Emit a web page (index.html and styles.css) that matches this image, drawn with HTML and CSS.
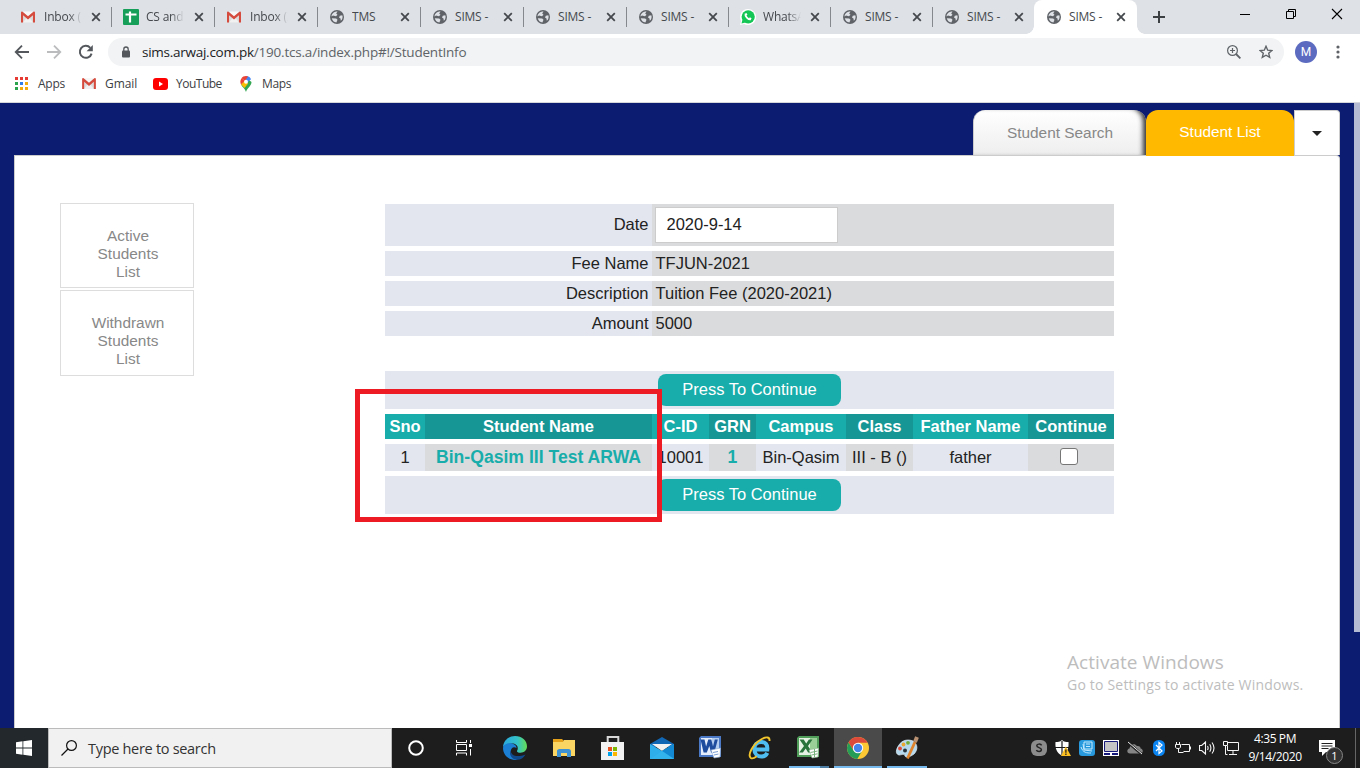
FILE: index.html
```html
<!DOCTYPE html>
<html lang="en">
<head>
<meta charset="utf-8">
<title>SIMS - Student Info</title>
<link rel="stylesheet" href="styles.css">
</head>
<body>
<svg class="sprite" width="0" height="0" aria-hidden="true">
  <symbol id="gmail" viewBox="0 0 15 12"><path fill="#dcdcdc" d="M1 1h13v11H1z"/><path fill="#f7f7f7" d="M2 0h11L7.500 6z"/><path fill="#fff" opacity=".6" d="M2 12l4-5h3l4 5z"/><path fill="#d54b3d" d="M0 1.300C0 .5.500 0 1.300 0L7.500 5.200 13.700 0c.8 0 1.300.5 1.300 1.300V12h-2.200V4.200L7.500 8.800 2.200 4.200V12H0z"/></symbol>
  <symbol id="globe" viewBox="0 0 14 14"><circle cx="7" cy="7" r="7" fill="#5f6368"/><path fill="#dee1e6" d="M7.500 1.500 6.200 3.400 7.500 4.800 6 6.300 3 5.600 1.500 6.500C1.600 3.600 4.300 1.300 7.500 1.500zM1.800 8.200l4.400.2 1.300 1.300-1.100 2.700C4 12.300 2.200 10.500 1.800 8.200zM12.300 5.200l-2.500.6-.8 1.800 1.500 1 .3 2.200c1.600-1.400 2.300-3.600 1.500-5.600z"/></symbol>
  <symbol id="x" viewBox="0 0 10 10"><path d="M1.200 1.200l7.600 7.600M8.800 1.200L1.200 8.800" stroke="#45494d" stroke-width="1.800"/></symbol>
</svg>

<header class="tabstrip">
  <div class="tab first"><svg class="fav mail"><use href="#gmail"/></svg><span class="fade">Inbox (1</span><svg class="close"><use href="#x"/></svg></div>
  <div class="tab"><svg class="fav" viewBox="0 0 16 16"><rect width="16" height="16" rx="1" fill="#169f58"/><path d="M2.500 5.500h11M7 2.500v11" stroke="#fff" stroke-width="2.200"/></svg><span class="fade">CS and</span><svg class="close"><use href="#x"/></svg></div>
  <div class="tab"><svg class="fav mail"><use href="#gmail"/></svg><span class="fade">Inbox (2</span><svg class="close"><use href="#x"/></svg></div>
  <div class="tab"><svg class="fav"><use href="#globe"/></svg><span>TMS</span><svg class="close"><use href="#x"/></svg></div>
  <div class="tab"><svg class="fav"><use href="#globe"/></svg><span>SIMS -</span><svg class="close"><use href="#x"/></svg></div>
  <div class="tab"><svg class="fav"><use href="#globe"/></svg><span>SIMS -</span><svg class="close"><use href="#x"/></svg></div>
  <div class="tab slim"><svg class="fav"><use href="#globe"/></svg><span>SIMS -</span><svg class="close"><use href="#x"/></svg></div>
  <div class="tab slim"><svg class="fav wa" viewBox="0 0 16 16"><path fill="#fff" d="M8 0a8 8 0 1 1-3.800 15L0 16l1.100-4A8 8 0 0 1 8 0z"/><circle cx="8.200" cy="7.800" r="6.600" fill="#14c656"/><path fill="#14c656" d="M1.500 14.500l1-4 3 3z"/><path d="M5.500 4.800c-.8 2.300 2.600 6 5.300 5.700" stroke="#fff" stroke-width="1.700" fill="none"/><path d="M5.600 4.500l1 1.700M9.300 9.200l1.800 1" stroke="#fff" stroke-width="2"/></svg><span class="fade">WhatsA</span><svg class="close"><use href="#x"/></svg></div>
  <div class="tab slim"><svg class="fav"><use href="#globe"/></svg><span>SIMS -</span><svg class="close"><use href="#x"/></svg></div>
  <div class="tab slim nosep"><svg class="fav"><use href="#globe"/></svg><span>SIMS -</span><svg class="close"><use href="#x"/></svg></div>
  <div class="tab active"><svg class="fav"><use href="#globe"/></svg><span>SIMS -</span><svg class="close"><use href="#x"/></svg></div>
  <svg class="newtab" viewBox="0 0 12 12"><path d="M6 0v12M0 6h12" stroke="#3c4043" stroke-width="2"/></svg>
  <div class="winctl">
    <svg viewBox="0 0 12 12"><path d="M1 6.500h10" stroke="#000"/></svg>
    <svg viewBox="0 0 12 12"><path d="M1.500 3.500h7v7h-7zM3.500 3.500v-2h7v7h-2" fill="none" stroke="#000"/></svg>
    <svg viewBox="0 0 12 12"><path d="M1 1l10 10M11 1L1 11" stroke="#000" stroke-width="1.100"/></svg>
  </div>
</header>

<div class="toolbar">
  <div class="nav">
    <svg viewBox="0 0 16 16"><path d="M15 8H2M8 1.700L1.700 8 8 14.300" fill="none" stroke="#54585d" stroke-width="1.800"/></svg>
    <svg viewBox="0 0 16 16"><path d="M1 8h13M8 1.700L14.300 8 8 14.300" fill="none" stroke="#babcbe" stroke-width="1.800"/></svg>
    <svg viewBox="0 0 16 16"><path d="M13.600 9.600A6 6 0 1 1 12.300 3.800" fill="none" stroke="#54585d" stroke-width="2"/><path fill="#54585d" d="M14.800 1v6.200H8.600z"/></svg>
  </div>
  <div class="omnibox">
    <svg class="lock" viewBox="0 0 10 12"><rect x="1" y="4.500" width="8" height="7" rx="1" fill="#54585d"/><path d="M2.800 5V3.200a2.200 2.200 0 0 1 4.400 0V5" fill="none" stroke="#54585d" stroke-width="1.300"/></svg>
    <span class="url"><b>sims.arwaj.com.pk</b>/190.tcs.a/index.php#!/StudentInfo</span>
    <svg class="mag" viewBox="0 0 14 14"><circle cx="5.500" cy="5.500" r="4.900" fill="none" stroke="#5f6368" stroke-width="1.200"/><path d="M9 9l4.400 4.400" stroke="#5f6368" stroke-width="1.800"/><path d="M5.500 3v5M3 5.500h5" stroke="#5f6368" stroke-width="1.200"/></svg>
    <svg class="star" viewBox="0 0 14 14"><path d="M7 1.300l1.700 3.900 4.200.3-3.200 2.800 1 4.100L7 10.200l-3.700 2.200 1-4.100L1.100 5.500l4.200-.3z" fill="none" stroke="#5f6368" stroke-width="1.400"/></svg>
  </div>
  <div class="avatar">M</div>
  <svg class="dots" viewBox="0 0 4 14"><g fill="#5f6368"><circle cx="2" cy="2" r="1.600"/><circle cx="2" cy="7" r="1.600"/><circle cx="2" cy="12" r="1.600"/></g></svg>
</div>

<nav class="bookmarks">
  <a class="bm apps"><svg viewBox="0 0 13 13" width="13" height="13"><path fill="#e53b32" d="M0 0h3v3H0zM5 0h3v3H5zM10 0h3v3h-3z"/><path fill="#2ba24c" d="M0 5h3v3H0zM0 10h3v3H0z"/><path fill="#2f7de9" d="M5 5h3v3H5z"/><path fill="#f3ab0c" d="M10 5h3v3h-3zM5 10h3v3H5zM10 10h3v3h-3z"/></svg><span>Apps</span></a>
  <a class="bm gm"><svg width="14" height="11"><use href="#gmail"/></svg><span>Gmail</span></a>
  <a class="bm yt"><svg viewBox="0 0 15 12" width="15" height="12"><rect width="15" height="12" rx="3" fill="#f00"/><path fill="#fff" d="M6 3.600v4.800L10 6z"/></svg><span>YouTube</span></a>
  <a class="bm mp"><svg viewBox="0 0 12 16" width="12" height="16"><path fill="#34a853" d="M1 8.500C2.500 11.500 5 12.500 6 16c.8-3.500 5.500-6 5.500-10L9 4z"/><path fill="#fbbc04" d="M1 8.500l3.500-4 3.600 3-3.600 4.500z"/><path fill="#4285f4" d="M6 0c2.200 0 4.200 1.200 5 3.200L7 7 4.500 5z"/><path fill="#ea4335" d="M6 0C4 0 2.400.8 1.500 2.200L5 5 8 .4z"/><path fill="#ea4335" d="M1.500 2.200C-.2 4.500.3 7 1 8.500L5 4.800z"/><circle cx="6" cy="5.700" r="2" fill="#fff"/></svg><span>Maps</span></a>
</nav>

<main class="page">
  <div class="pagetabs">
    <div class="ptab search">Student Search</div>
    <div class="ptab list">Student List</div>
    <div class="ptab more"><i></i></div>
  </div>
  <section class="panel">
    <aside class="side">
      <a>Active<br>Students<br>List</a>
      <a class="low">Withdrawn<br>Students<br>List</a>
    </aside>
    <div class="content">
      <div class="form">
        <div class="frow tall"><label>Date</label><div><span class="input">2020-9-14</span></div></div>
        <div class="frow"><label>Fee Name</label><div>TFJUN-2021</div></div>
        <div class="frow"><label>Description</label><div>Tuition Fee (2020-2021)</div></div>
        <div class="frow"><label>Amount</label><div>5000</div></div>
      </div>
      <div class="students">
        <div class="btnrow"><span class="btn">Press To Continue</span></div>
        <div class="srow head"><div>Sno</div><div>Student Name</div><div>C-ID</div><div>GRN</div><div>Campus</div><div>Class</div><div>Father Name</div><div>Continue</div></div>
        <div class="srow data"><div>1</div><div class="link">Bin-Qasim III Test ARWA</div><div>10001</div><div class="link">1</div><div>Bin-Qasim</div><div>III - B ()</div><div>father</div><div><i class="check"></i></div></div>
        <div class="btnrow"><span class="btn">Press To Continue</span></div>
        <div class="marker"></div>
      </div>
    </div>
  </section>
  <div class="scrollthumb"></div>
  <div class="watermark"><p class="wm1">Activate Windows</p><p class="wm2">Go to Settings to activate Windows.</p></div>
</main>

<footer class="taskbar">
  <div class="start"><svg viewBox="0 0 16 16" width="16" height="16"><path fill="#fff" d="M0 2.200L6.500 1.300v6.200H0zM7.300 1.200L16 0v7.500H7.300zM0 8.400h6.500v6.300L0 13.800zM7.300 8.400H16V16l-8.700-1.200z"/></svg></div>
  <div class="searchbox"><svg viewBox="0 0 16 16" width="16" height="16"><circle cx="10.500" cy="5.500" r="4.900" fill="none" stroke="#111" stroke-width="1.200"/><path d="M7 9L.5 15.500" stroke="#111" stroke-width="1.300"/></svg><span>Type here to search</span></div>
  <div class="cell"><svg viewBox="0 0 16 16" width="16" height="16"><circle cx="8" cy="8" r="6.800" fill="none" stroke="#fff" stroke-width="2"/></svg></div>
  <div class="cell tv"><svg viewBox="0 0 16 16" width="16" height="16"><path d="M.5 0v2.500h10V0M.5 4.500h10v6H.5zM.5 15.500V13h10v2.500M14.500 0v3M14.500 9v6.500" fill="none" stroke="#fff"/><path fill="#fff" d="M13 4h3v3h-3z"/></svg></div>
  <div class="apps-row">
    <div class="cell"><svg viewBox="0 0 24 24" width="24" height="24"><defs><linearGradient id="eg" x1="0" x2="1"><stop stop-color="#2aa7df"/><stop offset=".6" stop-color="#35c3c8"/><stop offset="1" stop-color="#65dc55"/></linearGradient></defs><path fill="url(#eg)" d="M0 11C.5 4.500 6 0 12 0c7 0 12 4.800 12 10.300 0 4-3 6.400-6.500 6.400-3 0-4-1-3.300-2.200C16 11 13.500 7.500 9 7.500 5 7.500 1.500 9 0 11z"/><path fill="#1b7fd4" d="M0 12c.3-3.500 5-5.500 9-4.500 3 .8 4.500 2.500 4.500 4.500-3-2-6 0-5.700 4 .3 4 3.500 7 6.700 7.700C6.500 25 0 19.500 0 12z"/><path fill="#114a8c" d="M8 14c-1 5.500 6 8 14.500 4.500-2 3.500-5 5.500-9 5.300C8 23 5.500 17.500 8 14z"/></svg></div>
    <div class="cell"><svg viewBox="0 0 22 20" width="22" height="20"><path fill="#e6a11a" d="M0 1h9l2 2v3H0z"/><path fill="#fbd564" d="M0 4h10l1-2h11v16H0z"/><path fill="#3f92d2" d="M4 19v-6.500A2.500 2.500 0 0 1 6.500 11h9a2.500 2.500 0 0 1 2.500 2.500V19h-4v-4H8v4z"/></svg></div>
    <div class="cell"><svg viewBox="0 0 24 24" width="24" height="24"><path d="M6.700 7V1h10.600v6" fill="none" stroke="#d9d9d9" stroke-width="2"/><path fill="#f2f2f2" d="M0 6h23v18H0z"/><path fill="#e7501f" d="M7 11h4v4H7z"/><path fill="#7eb700" d="M12 11h4v4h-4z"/><path fill="#00a2ec" d="M7 16h4v4H7z"/><path fill="#fbb600" d="M12 16h4v4h-4z"/></svg></div>
    <div class="cell"><svg viewBox="0 0 24 24" width="24" height="24"><path fill="#1267b4" d="M0 8l12-7 12 7v3H0z"/><path fill="#f2f2f2" d="M2 8h20L12 15z"/><path fill="#2eaeeb" d="M0 8l12 7 12-7v15H0z"/><path fill="#1489d3" d="M12 15l12-7v15z"/><path fill="#35b6ef" d="M0 23l12-8 12 8z" opacity=".6"/></svg></div>
    <div class="cell office"><svg viewBox="0 0 24 24" width="24" height="24"><path fill="#4b79c6" d="M4 1h20v21H2V3z"/><path fill="#e3edfb" d="M4 3h18v17H4z"/><path fill="#b2cdf0" d="M15 3h7v11h-7z"/><path fill="#1d4b9e" d="M3.500 4.500h4l1.600 7 2.200-7h3l1.700 7 1.800-7h3l-3.500 13h-3.200L12.300 11l-2.500 6.500H6.600z"/><path fill="#fff" stroke="#88a7d4" stroke-width=".6" d="M14 15l9.500-2L23 22l-6 1z"/><path d="M16 17.500l5-1M17 20l4.500-1" stroke="#7b9ed2"/></svg></div>
    <div class="cell"><svg viewBox="0 0 24 24" width="24" height="24"><path d="M6.500 13.500h12.800c.5-5-2-7.500-6-7.500-4.300 0-7 3-7 7 0 4.500 3 7.500 7 7.500 3 0 5-1.500 6-3.700" fill="none" stroke="#50bdf0" stroke-width="4"/><path d="M2.800 22C-.7 19 4.500 8.500 13 3.500c5-3 9-3 8.500 1.500M2.800 22c1.500 1 4-.2 6-1.700" fill="none" stroke="#f3c52d" stroke-width="1.900"/></svg></div>
    <div class="cell run office"><svg viewBox="0 0 24 24" width="24" height="24"><path fill="#519d5a" d="M4 1h20v21H2V3z"/><path fill="#e6f3e4" d="M4 3h18v17H4z"/><path fill="#9bcf98" d="M15 3h7v11h-7z"/><path fill="#28743b" d="M4.500 4.500h4.200l2.500 4 2.700-4h3.600L13 11l4.300 6.500h-4.200l-2.400-4-2.800 4H4.200L9 11z"/><path fill="#fff" stroke="#84b888" stroke-width=".6" d="M14 15l9.500-2L23 22l-6 1z"/><path d="M15.500 17.500l7-1.500M16.500 20l6-1.200M19.500 14v8" stroke="#78b37c"/></svg></div>
    <div class="cell chrome"><svg viewBox="0 0 24 24" width="24" height="24"><circle cx="12" cy="12" r="11" fill="#fcc934"/><path fill="#dc4a3c" d="M2.500 6.500A11 11 0 0 1 21.600 6.800H12L7.500 14.600z"/><path fill="#259d58" d="M2.500 6.500A11 11 0 0 0 11.300 23l5-8.500H7.500z"/><circle cx="12" cy="12" r="5.200" fill="#fff"/><circle cx="12" cy="12" r="4.200" fill="#4683eb"/></svg></div>
    <div class="cell paint"><svg viewBox="0 0 24 24" width="24" height="24"><path fill="#b6d9ee" stroke="#e7f4fb" stroke-width=".7" d="M4 9C7 4 13 3 18 5c5 3 5 9 1 13-4 3-8 4-9 2-1-3-3-1-6-1-4-1-3-6 0-10z"/><circle cx="5" cy="12.500" r="1.900" fill="#d84d3c"/><circle cx="8.500" cy="8.500" r="1.900" fill="#e8a733"/><circle cx="13" cy="6.800" r="1.900" fill="#72ad3a"/><circle cx="10" cy="14.500" r="2" fill="#28343b"/><path d="M12.500 22.500L20 6" stroke="#df842e" stroke-width="2.800"/><path d="M20 6l2-5" stroke="#b89172" stroke-width="4"/></svg></div>
  </div>
  <div class="tray">
    <svg viewBox="0 0 16 16"><rect width="16" height="16" rx="6" fill="#8c8c8c"/><path d="M10.600 5.300C9.800 3.700 5.800 3.600 5.800 5.800c0 2.100 4.600 1.500 4.600 3.800 0 2.500-4.200 2.300-5 .4" fill="none" stroke="#242424" stroke-width="1.500"/></svg>
    <svg viewBox="0 0 16 16"><path fill="#fff" d="M7 0c2 2 4 2 6.500 2 .5 6-1 11-6.500 13.500C1.500 13 0 8 .5 2 3 2 5 2 7 0z"/><path d="M7 1v14M0 7.500h14" stroke="#1c1c1c" stroke-width="1.200"/><path fill="#fbbf22" d="M10.800 6.500L16 16H6z"/><path d="M10.900 9.500v3.200M10.900 13.500v1.500" stroke="#222" stroke-width="1.300"/></svg>
    <svg viewBox="0 0 16 16"><rect width="16" height="16" rx="3" fill="#2799dc"/><path d="M5 2h8v7H5zM4 4l1 6 8 1M2 7c2 6 6 6 10 6M7 4h4M7 6.500h4" stroke="#c5eaff" fill="none" stroke-width="1"/></svg>
    <svg viewBox="0 0 16 16"><path fill="#fff" d="M0 0h16v16H0z"/><path fill="#c4c4c4" stroke="#16197a" d="M1.500 1.500h13v10h-13z"/><path fill="#16197a" d="M1 13h6v2H1zM9 13h6v2H9z"/></svg>
    <svg viewBox="0 0 16 16"><path fill="#858585" d="M3 13.500C-.5 13.500-.5 9 2.500 8.500 3 4 8 3 9.800 6c3-.5 4 1.500 3.700 2.500 3 .5 3 5 0 5z"/><path d="M1 2.500l14 12" stroke="#222" stroke-width="2.500"/><path d="M1 2l14 12" stroke="#e8e8e8"/></svg>
    <svg viewBox="0 0 16 16"><rect x="2" width="12" height="16" rx="5.500" fill="#0a84f0"/><path d="M5 5l6 6-3 2.500v-11L11 5l-6 6" fill="none" stroke="#fff" stroke-width="1.200"/></svg>
    <svg viewBox="0 0 16 16"><path d="M6.500 4.500h8v7h-6M15.500 6.500v3M1.500 2v2.500M4.500 2v2.500M.5 4.500h5V7c0 1-1 1.500-2.500 1.500C1.500 8.500.5 8 .5 7zM3.500 8.500v4h5" fill="none" stroke="#f5f5f5"/></svg>
    <svg viewBox="0 0 16 16"><path d="M.5 5.500h2.200L6.500 2v12l-3.800-3.500H.5zM8.500 6q1.200 2 0 4M10.700 4.200q2.400 3.800 0 7.600M13 2.500q4 5.500 0 11" fill="none" stroke="#f5f5f5" stroke-width="1.100"/></svg>
    <svg viewBox="0 0 16 16"><path d="M5 2.500h10.500v8H4.500V6M10 10.500v4M6 14.500h8M.5 1.500h4v4h-4zM2.500 5.500v9h2" fill="none" stroke="#f5f5f5"/></svg>
  </div>
  <div class="clock"><span class="time">4:35 PM</span><span class="date">9/14/2020</span></div>
  <div class="action"><svg viewBox="0 0 16 16" width="16" height="16"><path fill="#fff" d="M0 0h16v12H7l-4 4v-4H0z"/><path d="M2.500 3.500h11M2.500 6h11M2.500 8.500h7" stroke="#222"/></svg><span class="badge">1</span></div>
  <div class="peek"></div>
</footer>
</body>
</html>
```
FILE: styles.css
```css
* { box-sizing: border-box; }
html, body { height: 100%; }
body {
  margin: 0;
  width: 1360px;
  height: 768px;
  overflow: hidden;
  display: flex;
  flex-direction: column;
  font-family: "Open Sans", "Noto Sans", sans-serif;
  background: #fff;
}
svg { display: block; flex: none; }
.sprite { position: absolute; }

/* browser tab strip */
.tabstrip { flex: none; height: 34px; display: flex; background: #dee1e6; padding-left: 8px; }
.tab {
  position: relative;
  width: 103px;
  display: flex;
  align-items: center;
  padding-left: 13px;
  color: #45494d;
  font-size: 12px;
}
.tab.slim { width: 102px; }
.tab span { width: 38px; margin: -1px 0 0 8px; overflow: hidden; white-space: nowrap; letter-spacing: -0.2px; }
.tab .fade { -webkit-mask-image: linear-gradient(90deg, #000 65%, transparent 100%); mask-image: linear-gradient(90deg, #000 65%, transparent 100%); }
.tab::after { content: ""; position: absolute; right: -1px; top: 7px; width: 1px; height: 20px; background: #85898e; }
.tab.nosep::after, .tab.active::after { display: none; }
.fav { width: 14px; height: 14px; }
.fav.mail { height: 12px; }
.tab .mail + span { margin-left: 9px; margin-right: -1px; }
.fav.wa, .fav[viewBox="0 0 16 16"] { width: 16px; height: 16px; margin: 0 -1px; }
.close { width: 10px; height: 10px; margin-left: 10px; }
.slim .close, .active .close { margin-left: 9px; }
.tab.active { background: #fff; border-radius: 8px 8px 0 0; }
.tab.active::before {
  content: ""; position: absolute; left: -8px; right: -8px; bottom: 0; height: 8px;
  background: radial-gradient(circle at 0 0, transparent 7.5px, #fff 8px) left / 8px 8px no-repeat,
    radial-gradient(circle at 100% 0, transparent 7.5px, #fff 8px) right / 8px 8px no-repeat;
}
.newtab { width: 12px; height: 12px; margin: 11px 0 0 16px; }
.winctl { margin-left: auto; display: flex; gap: 34px; padding: 8px 17px 0 0; }
.winctl svg { width: 12px; height: 12px; }

/* address bar */
.toolbar { flex: none; height: 36px; display: flex; align-items: center; padding-left: 14px; }
.nav { display: flex; gap: 16px; width: 94px; }
.nav svg { width: 16px; height: 16px; }
.omnibox { width: 1176px; height: 28px; border-radius: 14px; background: #f1f3f4; display: flex; align-items: center; padding: 0 11px 0 13px; }
.lock { width: 10px; height: 12px; }
.url { margin-left: 11px; font-size: 13.500px; color: #5f6368; letter-spacing: -0.21px; flex: 1; white-space: nowrap; }
.url b { font-weight: 400; color: #202124; letter-spacing: -0.26px; }
.mag { width: 14px; height: 14px; margin-right: 18px; }
.star { width: 14px; height: 14px; }
.avatar { width: 22px; height: 22px; border-radius: 50%; background: #5c6bc0; color: #fff; font: 12px/22px Roboto, sans-serif; text-align: center; margin-left: 11px; }
.dots { width: 4px; height: 14px; margin-left: 19px; }

.bookmarks { flex: none; height: 33px; border-bottom: 1px solid #d5d7da; display: flex; align-items: center; padding: 0 0 5px 15px; font-size: 12px; color: #3c4043; }
.bm { display: flex; align-items: center; }
.apps { width: 67px; gap: 10px; letter-spacing: -0.25px; }
.gm { width: 71px; gap: 9px; letter-spacing: -0.05px; }
.yt { width: 87px; gap: 8px; letter-spacing: -0.5px; }
.mp { gap: 10px; letter-spacing: -0.35px; }

/* web page */
.page { position: relative; flex: 1; background: #0c1d71; padding: 7px 20px 0 14px; display: flex; flex-direction: column; font-family: "Liberation Sans", Arial, sans-serif; }
.pagetabs { height: 45px; display: flex; justify-content: flex-end; }
.ptab { height: 46px; font-size: 15.400px; line-height: 45px; text-align: center; }
.search { width: 173px; height: 45px; border-radius: 12px 12px 0 0; background: linear-gradient(#fff, #eee); color: #888; border-left: 1px solid #ccc; box-shadow: inset -6px 0 5px -3px #333; }
.list { width: 148px; border-radius: 12px 12px 0 0; background: #ffba00; color: #fff; line-height: 44px; position: relative; }
.more { width: 46px; height: 45px; background: #fff; border: 1px solid #ccc; border-bottom: 0; border-radius: 0 4px 0 0; display: flex; justify-content: center; padding: 20px 1px 0 0; }
.more i { width: 0; height: 0; border: 5.500px solid transparent; border-top-color: #222; border-bottom: 0; }
.panel { flex: 1; background: #fff; border: 1px solid #ccc; border-bottom: 0; border-radius: 0 4px 0 0; display: flex; padding: 47px 0 0 45px; }
.side { width: 134px; display: flex; flex-direction: column; gap: 2px; }
.side a { height: 85px; border: 1px solid #ddd; padding-top: 23px; padding-left: 2px; text-align: center; font-size: 15.400px; line-height: 18px; color: #888; }
.side .low { height: 86px; }
.content { width: 729px; margin: 1px 0 0 191px; font-size: 16.500px; color: #222; }
.form { display: flex; flex-direction: column; gap: 5px; }
.frow { height: 25px; line-height: 25px; display: flex; }
.frow label { width: 267px; background: #e3e6ee; text-align: right; padding-right: 3.500px; }
.frow div { flex: 1; background: #dadbdc; padding-left: 3.500px; }
.frow.tall { height: 42px; line-height: 40px; }
.frow.tall div { padding-left: 3px; }
.frow .input { display: block; width: 183px; height: 36px; margin-top: 3px; background: #fff; border: 1px solid #ccc; padding-left: 10.500px; line-height: 32px; }

.students { position: relative; margin-top: 35px; display: flex; flex-direction: column; gap: 5px; }
.btnrow { height: 38px; background: #e3e6ee; padding: 3px 0 0 273px; }
.btn { display: block; width: 183px; height: 32px; border-radius: 8px; background: #18adaa; color: #fff; text-align: center; line-height: 31px; }
.srow { display: grid; grid-template-columns: 40px 227px 57px 47px 90px 67px 115px 86px; text-align: center; white-space: nowrap; }
.head { height: 25px; line-height: 25px; color: #fff; font-weight: 700; }
.head div { background: #18adaa; }
.head div:nth-child(even) { background: #169795; }
.data { height: 27px; line-height: 27px; }
.data div { background: #e3e6ee; }
.data div:nth-child(even) { background: #dadbdc; }
.data .link { font-weight: 700; font-size: 17.600px; color: #18adaa; }
.check { display: block; width: 18px; height: 17px; margin: 4px auto 0 32px; border: 1px solid #767676; border-radius: 3px; background: #fff; }
.marker { position: absolute; left: -30px; top: 18px; width: 307px; height: 133px; border: 5px solid #ed1c24; }

.scrollthumb { position: absolute; right: 0; top: 0; width: 6px; height: 529px; background: #b6bbd4; }
.watermark { position: absolute; left: 1067px; top: 546px; font-family: "Open Sans", sans-serif; color: #bdbdbd; white-space: nowrap; }
.watermark p { margin: 0; }
.wm1 { font-size: 19px; line-height: 26px; letter-spacing: 0.05px; }
.wm2 { font-size: 14px; line-height: 20px; letter-spacing: 0.2px; }

/* taskbar */
.taskbar { flex: none; height: 40px; background: #1d1d1d; display: flex; color: #fff; }
.start { width: 48px; background: #22282b; display: flex; align-items: center; justify-content: center; }
.searchbox { width: 344px; background: #f1f1f1; border: 1px solid #bbb; display: flex; align-items: center; padding-left: 12px; gap: 11px; color: #333; font-size: 14.500px; letter-spacing: -0.3px; }
.cell { position: relative; width: 48px; display: flex; align-items: center; justify-content: center; }
.office svg { margin: -2px 0 0 -4px; }
.apps-row { display: flex; gap: 1px; margin-left: 3px; }
.run::after, .paint::after, .chrome::after { content: ""; position: absolute; bottom: 0; left: 4px; width: 40px; height: 2px; background: #76b9ed; }
.run::after { background: linear-gradient(90deg, #76b9ed 31px, #4f7ea5 31px); }
.chrome { background: #4a4a4a; }
.chrome::after { left: 0; width: 48px; }
.tray { margin-left: auto; display: flex; gap: 8px; align-items: center; padding-right: 4px; }
.tray svg { width: 16px; height: 16px; }
.clock { width: 64px; display: flex; flex-direction: column; align-items: center; font-size: 12px; line-height: 18px; padding-top: 2px; white-space: nowrap; letter-spacing: -0.4px; }
.action { position: relative; width: 48px; padding: 12px 0 0 12px; }
.badge { position: absolute; left: 19px; top: 19px; width: 17px; height: 17px; border-radius: 50%; background: #333; border: 1px solid #888; text-align: center; font-size: 11px; line-height: 15px; }
.peek { width: 5px; border-left: 1px solid #666; }
```
